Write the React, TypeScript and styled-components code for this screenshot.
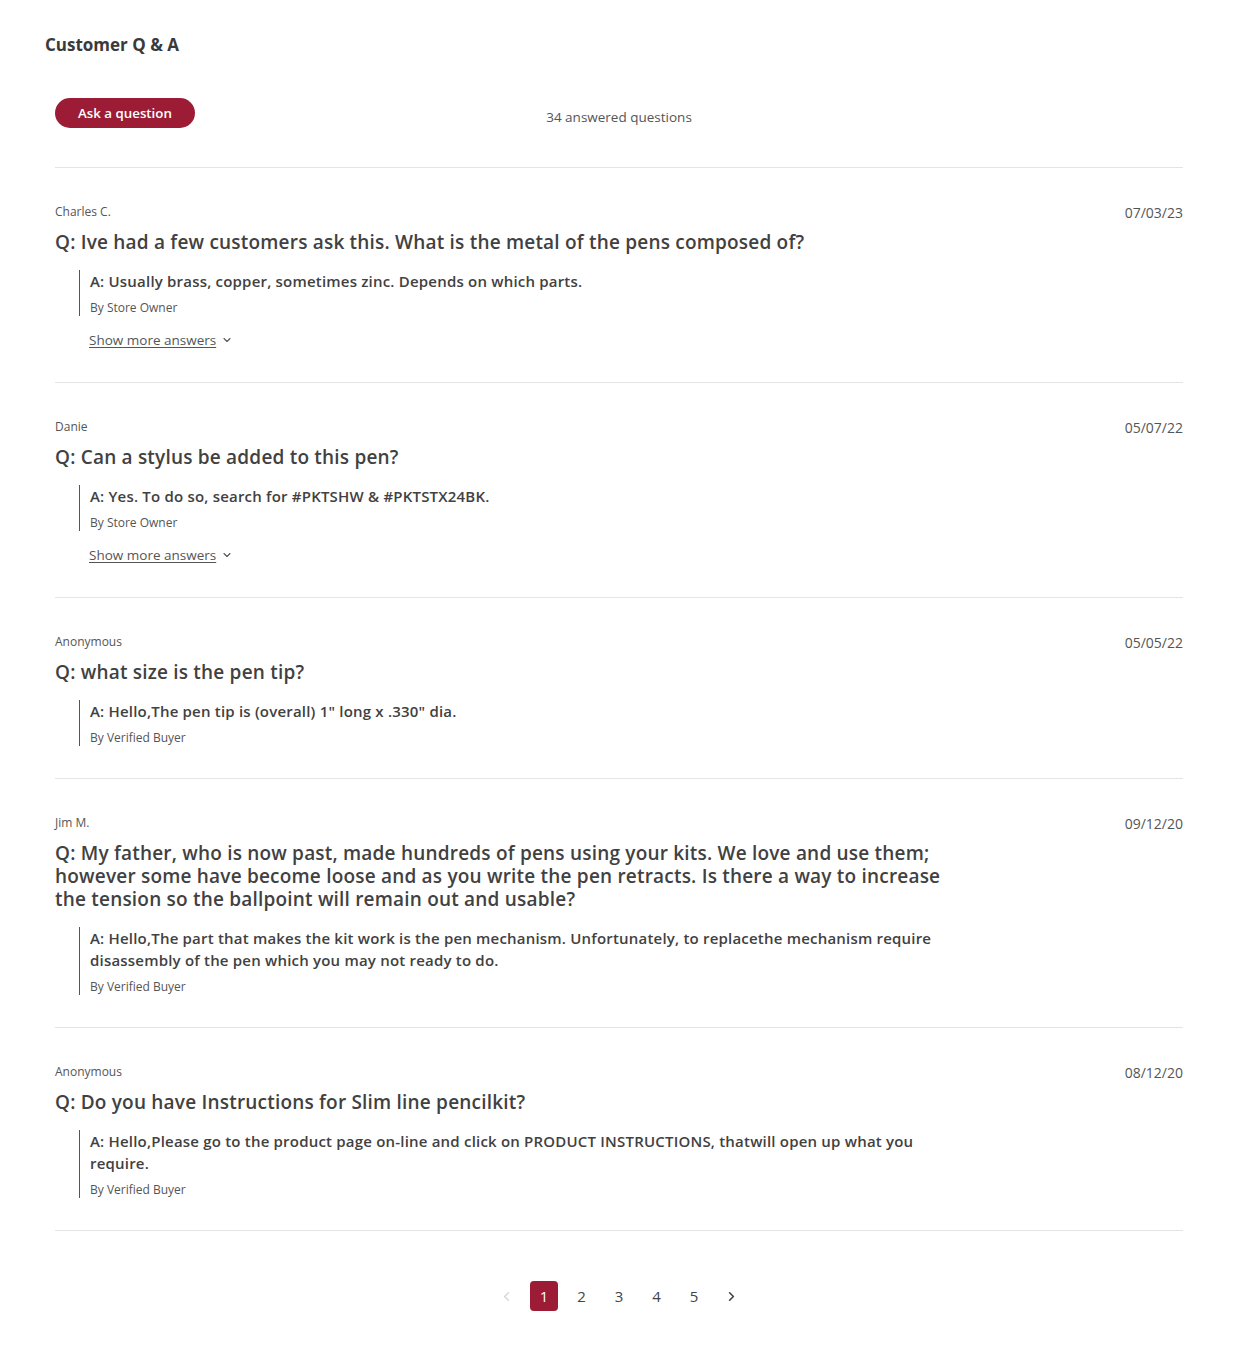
import React from "react";
import styled, { createGlobalStyle } from "styled-components";
import { ChevronDown, ChevronLeft, ChevronRight } from "lucide-react";

const Global = createGlobalStyle`
  html, body { margin: 0; padding: 0; background: #fff; }
  body { font-family: "Open Sans", "Noto Sans", sans-serif; color: #414141; }
  * { box-sizing: border-box; }
`;

const Page = styled.main`
  padding: 34px 61px 36px 55px;
`;

const Title = styled.h2`
  margin: 0 0 0 -10px;
  font-family: "Open Sans", sans-serif;
  font-size: 17px;
  line-height: 22px;
  font-weight: 700;
  color: #3a3a3a;
`;

const Toolbar = styled.div`
  display: grid;
  grid-template-columns: 1fr auto 1fr;
  align-items: start;
  margin-top: 42px;
  padding-bottom: 39px;
  border-bottom: 1px solid #e4e4e4;
`;

const AskButton = styled.button`
  justify-self: start;
  height: 30px;
  padding: 0 23px;
  border: none;
  border-radius: 15px;
  background: #9c1c36;
  color: #fff;
  font-family: inherit;
  font-size: 13.3px;
  font-weight: 600;
  cursor: pointer;
`;

const Count = styled.div`
  padding-top: 9px;
  font-size: 13.5px;
  line-height: 20px;
  color: #555;
`;

const Item = styled.article`
  padding: 36px 0 32px;
  border-bottom: 1px solid #e4e4e4;
`;

const Meta = styled.div`
  display: flex;
  justify-content: space-between;
  align-items: flex-start;
`;

const Author = styled.span`
  font-size: 12px;
  line-height: 16px;
  color: #555;
`;

const DateText = styled.span`
  font-size: 14px;
  line-height: 18px;
  color: #555;
`;

const Body = styled.div`
  max-width: 900px;
`;

const Question = styled.h3`
  margin: 9px 0 0;
  font-size: 19px;
  line-height: 23px;
  letter-spacing: 0.2px;
  font-weight: 600;
  color: #414141;
`;

const Answer = styled.div`
  margin: 16px 0 0 24px;
  padding-left: 10px;
  border-left: 1px solid #555;
`;

const AnswerText = styled.p`
  margin: 0;
  font-size: 15px;
  line-height: 22px;
  letter-spacing: 0.2px;
  font-weight: 600;
  color: #414141;
`;

const ByLine = styled.div`
  margin-top: 8px;
  font-size: 12px;
  line-height: 16px;
  color: #555;
`;

const MoreLink = styled.a`
  display: inline-flex;
  align-items: center;
  gap: 5px;
  margin: 14px 0 0 34px;
  font-size: 13.5px;
  line-height: 20px;
  color: #555;
  cursor: pointer;
  span { text-decoration: underline; text-underline-offset: 2px; }
`;

const Pager = styled.nav`
  display: flex;
  justify-content: center;
  align-items: center;
  gap: 9.5px;
  margin-top: 50px;
`;

const PageBtn = styled.button<{ $active?: boolean; $muted?: boolean }>`
  width: 28px;
  height: 30px;
  display: flex;
  align-items: center;
  justify-content: center;
  padding: 0;
  border: none;
  border-radius: 4px;
  background: ${(p) => (p.$active ? "#9c1c36" : "transparent")};
  color: ${(p) => (p.$active ? "#fff" : p.$muted ? "#d4d4d4" : "#444")};
  font-family: inherit;
  font-size: 15px;
  cursor: pointer;
`;

type QA = {
  author: string;
  date: string;
  q: string;
  a: string;
  by: string;
  more?: boolean;
};

const items: QA[] = [
  {
    author: "Charles C.",
    date: "07/03/23",
    q: "Q: Ive had a few customers ask this. What is the metal of the pens composed of?",
    a: "A: Usually brass, copper, sometimes zinc. Depends on which parts.",
    by: "By Store Owner",
    more: true,
  },
  {
    author: "Danie",
    date: "05/07/22",
    q: "Q: Can a stylus be added to this pen?",
    a: "A: Yes. To do so, search for #PKTSHW & #PKTSTX24BK.",
    by: "By Store Owner",
    more: true,
  },
  {
    author: "Anonymous",
    date: "05/05/22",
    q: "Q: what size is the pen tip?",
    a: "A: Hello,The pen tip is (overall) 1\" long x .330\" dia.",
    by: "By Verified Buyer",
  },
  {
    author: "Jim M.",
    date: "09/12/20",
    q: "Q: My father, who is now past, made hundreds of pens using your kits. We love and use them; however some have become loose and as you write the pen retracts. Is there a way to increase the tension so the ballpoint will remain out and usable?",
    a: "A: Hello,The part that makes the kit work is the pen mechanism. Unfortunately, to replacethe mechanism require disassembly of the pen which you may not ready to do.",
    by: "By Verified Buyer",
  },
  {
    author: "Anonymous",
    date: "08/12/20",
    q: "Q: Do you have Instructions for Slim line pencilkit?",
    a: "A: Hello,Please go to the product page on-line and click on PRODUCT INSTRUCTIONS, thatwill open up what you require.",
    by: "By Verified Buyer",
  },
];

export default function App() {
  return (
    <>
      <Global />
      <Page>
        <Title>Customer Q &amp; A</Title>
        <Toolbar>
          <AskButton>Ask a question</AskButton>
          <Count>34 answered questions</Count>
          <span />
        </Toolbar>
        {items.map((it, i) => (
          <Item key={i}>
            <Meta>
              <Author>{it.author}</Author>
              <DateText>{it.date}</DateText>
            </Meta>
            <Body>
              <Question>{it.q}</Question>
              <Answer>
                <AnswerText>{it.a}</AnswerText>
                <ByLine>{it.by}</ByLine>
              </Answer>
              {it.more && (
                <MoreLink>
                  <span>Show more answers</span>
                  <ChevronDown size={12} strokeWidth={2.2} />
                </MoreLink>
              )}
            </Body>
          </Item>
        ))}
        <Pager>
          <PageBtn $muted aria-label="Previous">
            <ChevronLeft size={15} strokeWidth={2} />
          </PageBtn>
          <PageBtn $active>1</PageBtn>
          <PageBtn>2</PageBtn>
          <PageBtn>3</PageBtn>
          <PageBtn>4</PageBtn>
          <PageBtn>5</PageBtn>
          <PageBtn aria-label="Next">
            <ChevronRight size={15} strokeWidth={2.6} />
          </PageBtn>
        </Pager>
      </Page>
    </>
  );
}
